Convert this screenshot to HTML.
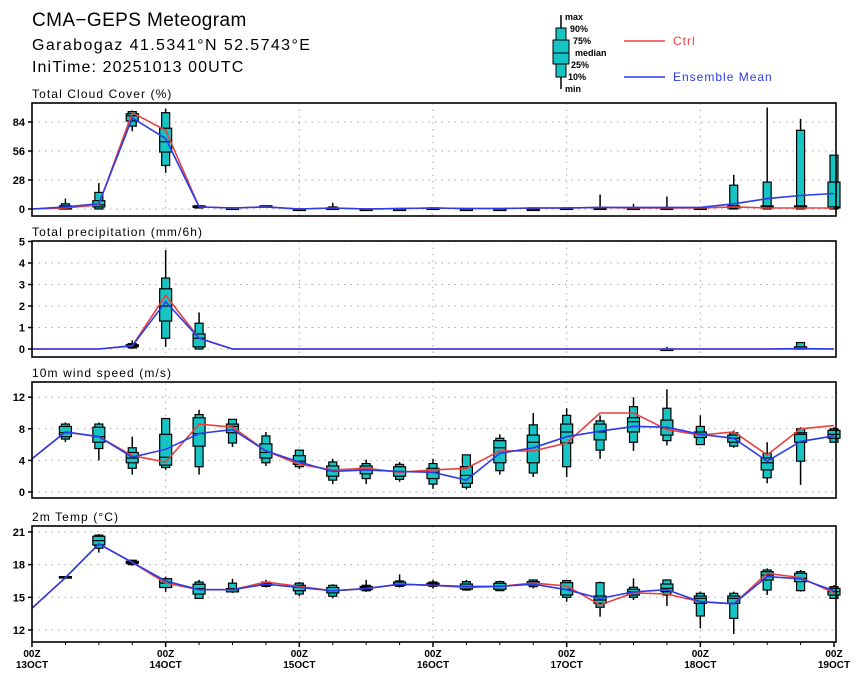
<!DOCTYPE html>
<html><head><meta charset="utf-8">
<style>
html,body{margin:0;padding:0;background:#fff;}
svg{display:block;font-family:"Liberation Sans",sans-serif;}
</style></head>
<body>
<svg id="s" width="860" height="680" viewBox="0 0 860 680" xmlns="http://www.w3.org/2000/svg">
<text x="32" y="26" font-size="19" letter-spacing="0.4">CMA−GEPS Meteogram</text>
<text x="32" y="50" font-size="16" letter-spacing="1.4">Garabogaz 41.5341°N 52.5743°E</text>
<text x="32" y="72" font-size="16" letter-spacing="1.1">IniTime: 20251013 00UTC</text>
<g font-size="9" font-weight="bold">
<line x1="561" y1="15" x2="561" y2="89" stroke="#000" stroke-width="1.5"/>
<rect x="556" y="28" width="10" height="49" fill="#17c4c4" stroke="#000"/>
<rect x="553" y="40" width="16" height="24" fill="#17c4c4" stroke="#000"/>
<line x1="553" y1="53" x2="569" y2="53" stroke="#000"/>
<text x="565" y="20">max</text><text x="570" y="32">90%</text><text x="573" y="44">75%</text>
<text x="575" y="56">median</text><text x="571" y="68">25%</text><text x="568" y="80">10%</text><text x="565" y="92">min</text>
</g>
<line x1="624" y1="41" x2="665" y2="41" stroke="#e84040" stroke-width="1.5"/>
<text x="673" y="45" font-size="12" fill="#e84040" letter-spacing="1">Ctrl</text>
<line x1="624" y1="77" x2="665" y2="77" stroke="#2b3be8" stroke-width="1.5"/>
<text x="673" y="81" font-size="12" fill="#2b3be8" letter-spacing="1">Ensemble Mean</text>
<g id="plots"></g>
</svg>
<script>
var NS="http://www.w3.org/2000/svg",G=document.getElementById("plots");
function el(t,a,txt){var e=document.createElementNS(NS,t);for(var k in a)e.setAttribute(k,a[k]);if(txt!==undefined)e.textContent=txt;G.appendChild(e);return e;}
var X0=32,X1=836,DX=(834-32)/24;
function xs(i){return X0+DX*i;}
function z6(zy){return 12+(120-zy/3)/10.9;}
var panels=[
{title:"Total Cloud Cover (%)",top:103,bot:216,y0:209,ppu:29/28,ticks:[0,28,56,84],
ctrl:[0,1,4,93,76,2,1,2,0,1,0,0.5,1,0.5,0.5,1,1,1.5,1,1,1,2,1,1,1],
mean:[0,2,5,88,68,2,1,2,0,1,0,0.5,1,0.5,0.5,1,1,1.5,1.5,1.5,1.5,5,10,13,15],
box:[null,[0,0,0,1,3,5,10],[0,0,2,4,8,16,25],[75,80,85,90,92,94,95],[35,42,55,65,78,93,97],
[1,1,2,2,3,3,3],[0,0,0,1,1,1,1],[1,2,2,2,3,3,3],[0,0,0,0,0,0,1],[0,0,0,1,1,2,6],[0,0,0,0,0,0,0],[0,0,0,0,0,0,1],[0,0,0,0,1,1,1],
[0,0,0,0,0,0,1],[0,0,0,0,0,0,0],[0,0,0,0,0,1,1],[0,0,0,0,1,1,1],[0,0,0,0,1,1,14],[0,0,0,0,1,1,5],[0,0,0,0,1,1,12],[0,0,0,0,1,1,1],
[0,0,1,2,3,23,33],[0,0,1,2,3,26,98],[0,0,1,2,3,76,87],[0,0,1,2,26,52,52]]},
{title:"Total precipitation (mm/6h)",top:241,bot:357,y0:349,ppu:21.5,ticks:[0,1,2,3,4,5],
ctrl:[0,0,0,0.15,2.5,0.5,0,0,0,0,0,0,0,0,0,0,0,0,0,0,0,0,0,0,0],
mean:[0,0,0,0.15,2.2,0.5,0,0,0,0,0,0,0,0,0,0,0,0,0,0,0,0,0,0.02,0],
box:[null,null,null,[0,0.05,0.1,0.15,0.2,0.25,0.4],[0.1,0.5,1.3,2.0,2.8,3.3,4.6],[0,0,0.1,0.5,0.7,1.2,1.7],null,null,null,null,null,null,null,null,null,null,null,null,null,[0,0,0,0,0,0,0.1],null,null,null,[0,0,0,0,0.1,0.3,0.3],null]},
{title:"10m wind speed (m/s)",top:382,bot:498,y0:492,ppu:7.9,ticks:[0,4,8,12],
ctrl:[4.2,7.6,7,4.6,3.8,8.6,8.2,5.2,3.5,2.8,3,2.5,2.8,3.0,5.2,5.2,6.2,10,10,7.9,7.2,7.6,4.7,8.0,8.4],
mean:[4.2,7.6,7,4.4,5.4,7.4,7.9,5.2,3.8,2.6,2.8,2.6,2.5,1.5,4.9,5.6,7.0,7.7,8.3,8.2,7.3,6.8,3.9,6.4,7.1],
box:[null,[6.3,6.7,7,7.5,8.3,8.6,8.8],[4,5.5,6.3,7,8.2,8.6,8.8],[2.2,3,3.7,4.3,5,5.6,7],[2.8,3.1,3.4,4.4,7.3,9.3,9.3],[2.2,3.2,5.8,7.4,9.4,9.8,10.4],
[5.7,6.2,7.5,8.3,8.6,9.2,9.2],[3.3,3.7,4.3,5,6.1,7.1,7.6],[2.9,3.2,3.5,3.9,4.6,5.3,5.3],[1,1.5,2,2.7,3.3,3.8,4.2],[1,1.7,2.3,2.8,3.3,3.6,4.1],[1.3,1.6,2,2.6,3.2,3.5,3.8],
[0.4,1,1.7,2.5,3,3.6,4.2],[0.3,0.6,1.1,2.1,3.2,4.7,4.7],[2.2,2.7,3.7,5.6,6.5,6.8,7.3],[1.9,2.4,3.7,6.3,7.2,8.5,10],[1.9,3.2,6.2,7.6,8.6,9.7,10.6],
[4.2,5.3,6.6,7.6,8.6,9.0,9.7],[5.2,6.3,7.6,8.9,9.4,10.8,12],[5.9,6.5,7.2,8.1,9.1,10.6,13],[6,6,6.9,7.3,7.6,8.3,9.7],[5.6,5.8,6.3,6.8,7.2,7.5,7.8],
[1.1,1.8,2.8,3.7,4.3,4.9,6.3],[0.9,3.9,6.3,7.3,7.5,8.0,8.2],[6.3,6.3,6.8,7.3,7.8,8.0,8.2]]},
{title:"2m Temp (°C)",top:526,bot:642,y0:630,ppu:10.9,ticks:[12,15,18,21],base:12,
ctrl:[14,16.8,19.9,18.2,16.3,15.7,15.7,16.4,16.0,15.6,15.8,16.2,16.1,15.9,16.0,16.3,z6(228),14.3,15.4,15.3,14.6,14.4,17.2,16.8,15.4],
mean:[14,16.8,19.9,18.2,16.5,15.7,15.7,16.2,15.9,15.6,15.8,16.2,16.1,16.0,16.0,16.2,15.7,14.9,15.5,15.7,14.6,14.4,16.9,16.7,15.6],
box:[null,[16.75,16.8,16.8,16.85,16.9,16.9,16.95],[19.1,19.5,19.8,20.2,20.6,20.7,20.8],[17.9,18,18.1,18.2,18.3,18.4,18.4],[15.5,15.9,15.9,16.3,16.7,16.7,16.9],
[14.9,14.9,15.3,15.8,16.2,16.4,16.6],[15.4,15.5,15.5,15.7,15.8,16.3,16.7],[15.9,16.0,16.1,16.2,16.3,16.4,16.6],[15.1,15.3,15.6,15.9,16.1,16.3,16.4],
[14.9,15.1,15.4,15.6,15.9,16.1,16.2],[15.5,15.6,15.7,15.9,16.0,16.1,16.6],[15.9,16.0,16.1,16.2,16.4,16.5,17.1],[15.8,16.0,16.1,16.2,16.3,16.4,16.6],
[z6(242),z6(240),z6(237),z6(230),z6(222),z6(215),z6(210)],[z6(242),z6(242),z6(238),z6(228),z6(220),z6(215),z6(212)],[z6(235),z6(230),z6(225),z6(220),z6(215),z6(210),z6(208)],
[z6(275),z6(262),z6(255),z6(238),z6(218),z6(212),z6(210)],[z6(320),z6(292),z6(280),z6(270),z6(258),z6(218),z6(215)],[z6(270),z6(262),z6(255),z6(245),z6(238),z6(232),z6(205)],
[z6(288),z6(255),z6(245),z6(235),z6(222),z6(210),z6(208)],[z6(355),z6(318),z6(280),z6(265),z6(258),z6(250),z6(245)],[z6(372),z6(325),z6(280),z6(265),z6(258),z6(250),z6(245)],
[z6(255),z6(240),z6(210),z6(195),z6(185),z6(180),z6(175)],[z6(245),z6(242),z6(215),z6(205),z6(190),z6(185),z6(180)],[z6(265),z6(265),z6(255),z6(245),z6(235),z6(230),z6(225)]]}
];
panels.forEach(function(p){
  var b=p.base||0;function ys(v){return p.y0-(v-b)*p.ppu;}
  el("text",{x:32,y:p.top-5,"font-size":12,"letter-spacing":1.1},p.title);
  p.ticks.forEach(function(t){var y=ys(t);
    el("line",{x1:X0,x2:X1,y1:y,y2:y,stroke:"#aaa","stroke-width":1,"stroke-dasharray":"1.5 5"});
    el("line",{x1:X0-4,x2:X0,y1:y,y2:y,stroke:"#000","stroke-width":1.5});
    el("text",{x:X0-7,y:y+4,"font-size":11,"font-weight":"bold","text-anchor":"end"},String(t));});
  for(var d=1;d<6;d++){var x=xs(d*4);el("line",{x1:x,x2:x,y1:p.top,y2:p.bot,stroke:"#aaa","stroke-width":1,"stroke-dasharray":"1.5 5"});}
  p.box.forEach(function(q,i){if(!q)return;var x=xs(i);
    el("line",{x1:x,x2:x,y1:ys(q[0]),y2:ys(q[6]),stroke:"#000","stroke-width":1.5});
    el("rect",{x:x-4,y:ys(q[5]),width:8,height:Math.max(ys(q[1])-ys(q[5]),1),fill:"#17c4c4",stroke:"#000","stroke-width":1.2});
    el("rect",{x:x-6,y:ys(q[4]),width:12,height:Math.max(ys(q[2])-ys(q[4]),1.5),fill:"#17c4c4",stroke:"#000","stroke-width":1.2});
    el("line",{x1:x-6,x2:x+6,y1:ys(q[3]),y2:ys(q[3]),stroke:"#000","stroke-width":1.2});});
  function pl(a,c){el("polyline",{points:a.map(function(v,i){return xs(i).toFixed(1)+","+ys(v).toFixed(1);}).join(" "),fill:"none",stroke:c,"stroke-width":1.6});}
  pl(p.ctrl,"#e84040");pl(p.mean,"#2b3be8");
  el("rect",{x:X0,y:p.top,width:X1-X0,height:p.bot-p.top,fill:"none",stroke:"#000","stroke-width":1.6});
});
var days=["13OCT","14OCT","15OCT","16OCT","17OCT","18OCT","19OCT"];
for(var d=0;d<7;d++){var x=xs(d*4);
  el("line",{x1:x,x2:x,y1:642,y2:647,stroke:"#000","stroke-width":1.5});
  el("text",{x:x,y:657,"font-size":10,"font-weight":"bold","text-anchor":"middle"},"00Z");
  el("text",{x:x,y:668,"font-size":10,"font-weight":"bold","text-anchor":"middle"},days[d]);}
for(var i=1;i<24;i++){if(i%4)el("line",{x1:xs(i),x2:xs(i),y1:642,y2:645,stroke:"#000","stroke-width":1});}
</script>
</body></html>
